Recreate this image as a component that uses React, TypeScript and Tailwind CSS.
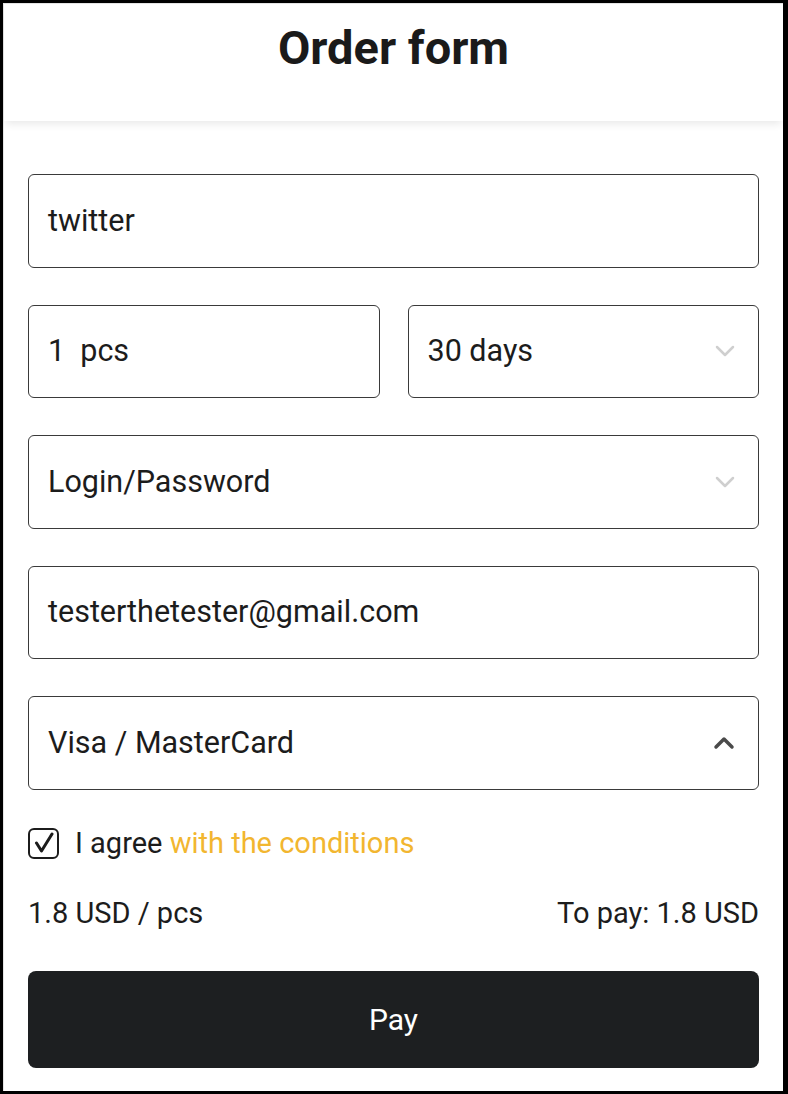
import React from 'react';

const font = { fontFamily: 'Roboto, "Liberation Sans", sans-serif' };

function ChevronDown() {
  return (
    <svg width="22" height="14" viewBox="0 0 22 14" fill="none">
      <path d="M3 3 L11 11 L19 3" stroke="#cfcfcf" strokeWidth="2.5" strokeLinecap="round" strokeLinejoin="round" />
    </svg>
  );
}

function ChevronUp() {
  return (
    <svg width="24" height="16" viewBox="0 0 24 16" fill="none">
      <path d="M4 12 L12 4 L20 12" stroke="#4a4a4a" strokeWidth="3.5" strokeLinecap="round" strokeLinejoin="round" />
    </svg>
  );
}

function Field({ value, icon }: { value: string; icon?: React.ReactNode }) {
  return (
    <div className="flex h-[93.5px] items-center justify-between rounded-[6px] border-[1.5px] border-[#3a3a3a] bg-white pl-[19px] pr-[22px]">
      <span className="whitespace-pre text-[30.5px] leading-none text-[#1c1c1c]">{value}</span>
      {icon}
    </div>
  );
}

export default function App() {
  return (
    <div className="h-[1094px] w-[788px] bg-black pb-[3px] pl-[3px] pr-[5px] pt-[3px]" style={font}>
      <div className="flex h-full flex-col border-l border-t border-[#e4e4e4] bg-white">
        {/* Header */}
        <div className="h-[117px] bg-white shadow-[0_5px_8px_-2px_rgba(0,0,0,0.09)]">
          <h1 className="pt-[20px] text-center text-[47px] font-bold leading-none text-[#1a1a1a]">Order form</h1>
        </div>

        {/* Fields */}
        <div className="flex flex-col gap-[37px] px-[24px] pt-[53px]">
          <Field value="twitter" />
          <div className="grid grid-cols-2 gap-[28px]">
            <Field value="1  pcs" />
            <Field value="30 days" icon={<ChevronDown />} />
          </div>
          <Field value="Login/Password" icon={<ChevronDown />} />
          <Field value="testerthetester@gmail.com" />
          <Field value="Visa / MasterCard" icon={<ChevronUp />} />
        </div>

        {/* Agreement */}
        <div className="flex items-center gap-[16px] px-[24px] pt-[38px]">
          <div className="flex h-[31px] w-[31px] items-center justify-center rounded-[6px] border-2 border-[#1c1c1c]">
            <svg width="22" height="22" viewBox="0 0 22 22" fill="none">
              <path d="M3.5 11 L8.5 19 L19 2" stroke="#1c1c1c" strokeWidth="3" strokeLinecap="round" strokeLinejoin="round" />
            </svg>
          </div>
          <span className="text-[29px] leading-none text-[#1c1c1c]">
            I agree <span className="text-[#f2b630]">with the conditions</span>
          </span>
        </div>

        {/* Price */}
        <div className="flex items-center justify-between px-[24px] pt-[40px] text-[29px] leading-none text-[#1c1c1c]">
          <span>1.8 USD / pcs</span>
          <span>To pay: 1.8 USD</span>
        </div>

        {/* Pay button */}
        <div className="px-[24px] pt-[43px]">
          <button className="flex h-[97px] w-full items-center justify-center rounded-[8px] bg-[#1d1f21] text-[30px] text-white">
            Pay
          </button>
        </div>
      </div>
    </div>
  );
}
